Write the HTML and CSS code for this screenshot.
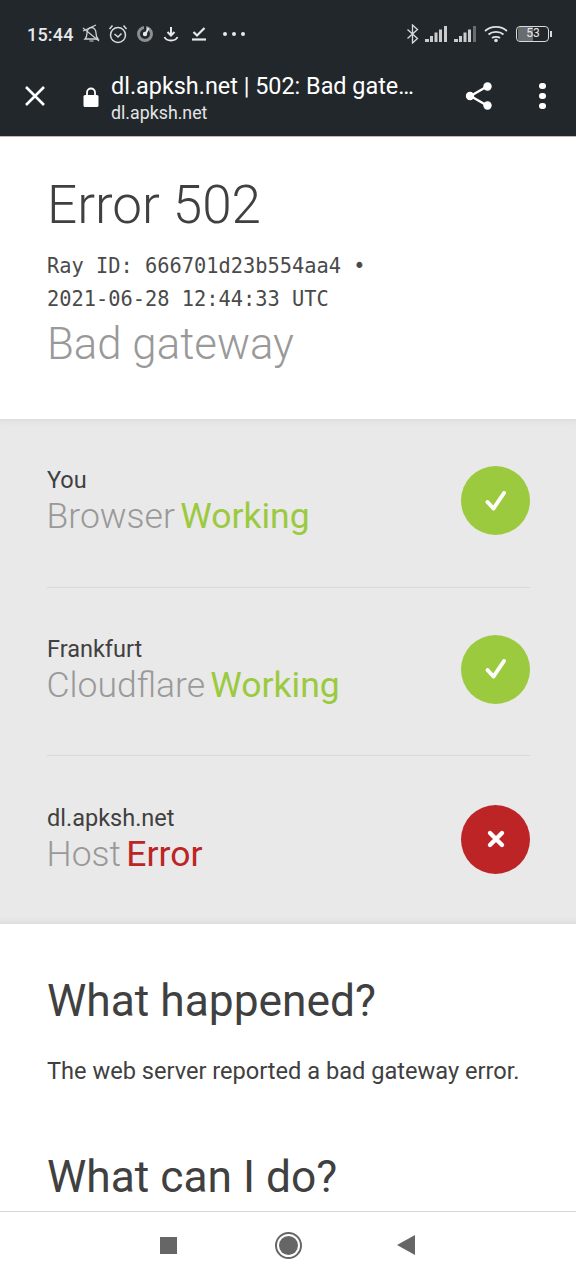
FILE: index.html
```html
<!DOCTYPE html>
<html lang="en">
<head>
<meta charset="utf-8">
<title>dl.apksh.net | 502: Bad gateway</title>
<link rel="stylesheet" href="styles.css">
</head>
<body>
<header class="chrome">
  <div class="status">
    <span class="time">15:44</span>
    <svg class="si bell" width="22" height="22" viewBox="0 0 22 22"><path d="M5 16c1.500-1.500 2-3 2-6 0-3 2-5.500 4.500-5.500S16 7 16 10c0 3 .5 4.500 2 6z" fill="none" stroke="#d0d2d3" stroke-width="1.300"/><path d="M9.500 18h4M3 5l16 13M3 8l13-6" fill="none" stroke="#d0d2d3" stroke-width="1.200"/></svg>
    <svg class="si alarm" width="20" height="22" viewBox="0 0 20 22"><circle cx="10" cy="12" r="7.500" fill="none" stroke="#d8dadb" stroke-width="1.500"/><path d="M6.500 11l3.500 3 3.500-3.500M1.500 6l3-3.500M18.500 6l-3-3.500" fill="none" stroke="#d8dadb" stroke-width="1.500"/></svg>
    <svg class="si prog" width="18" height="18" viewBox="0 0 18 18"><circle cx="9" cy="9" r="6.500" fill="none" stroke="#8b8d8f" stroke-width="3"/><path d="M9 9V1" stroke="#22272b" stroke-width="2"/><circle cx="9" cy="9" r="2.200" fill="#e6e7e8"/><path d="M12.500 3L10 8" stroke="#e6e7e8" stroke-width="2"/></svg>
    <svg class="si dl" width="16" height="18" viewBox="0 0 16 18"><path d="M8 2v8M4.500 7L8 10.500 11.500 7" fill="none" stroke="#e8e9ea" stroke-width="2"/><path d="M1.500 12c1 2.500 3.500 3.500 6.500 3.500s5.500-1 6.500-3.500" fill="none" stroke="#e8e9ea" stroke-width="1.800"/></svg>
    <svg class="si done" width="16" height="18" viewBox="0 0 16 18"><path d="M2.500 7l3.500 3.500L13.500 3" fill="none" stroke="#e8e9ea" stroke-width="2.200"/><path d="M1 14.500h14" stroke="#e8e9ea" stroke-width="2.200"/></svg>
    <span class="dots"><i></i><i></i><i></i></span>
    <span class="spacer"></span>
    <svg class="si bt" width="13" height="20" viewBox="0 0 13 20"><path d="M1.500 5.500l10 9-5 4.500V1l5 4.500-10 9" fill="none" stroke="#d8dadb" stroke-width="1.300"/></svg>
    <svg class="sig" width="22" height="18" viewBox="0 0 22 18"><path d="M0 14h4v3H0zM5 11h3v6H5zM9.500 7.500h3V17h-3zM14 4.500h3V17h-3zM19 1h3v16h-3z" fill="#c9cbcc"/></svg>
    <svg class="sig" width="22" height="18" viewBox="0 0 22 18"><path d="M0 14h4v3H0zM5 11h3v6H5zM9.500 7.500h3V17h-3zM14 4.500h3V17h-3z" fill="#c9cbcc"/><path d="M19 1h3v16h-3z" fill="#6a6d70"/></svg>
    <svg class="si wifi" width="24" height="18" viewBox="0 0 24 18"><path d="M1 6c6-5.500 16-5.500 22 0M4.500 9.500c4-3.500 11-3.500 15 0M8 13c2-1.500 6-1.500 8 0" fill="none" stroke="#e0e1e2" stroke-width="1.800"/><circle cx="12" cy="15.500" r="1.800" fill="#e0e1e2"/></svg>
    <span class="battery"><span class="level">53</span></span><span class="tip"></span>
  </div>
  <div class="toolbar">
    <svg class="close" width="24" height="24" viewBox="0 0 24 24"><path d="M3 3l18 18M21 3L3 21" stroke="#fff" stroke-width="2.600" fill="none"/></svg>
    <svg class="lock" width="18" height="22" viewBox="0 0 18 22"><path d="M3 9h12a1.500 1.500 0 0 1 1.500 1.500v9A1.500 1.500 0 0 1 15 21H3a1.500 1.500 0 0 1-1.500-1.500v-9A1.500 1.500 0 0 1 3 9z" fill="#fff"/><path d="M5 10V6.500a4 4 0 0 1 8 0V10" fill="none" stroke="#fff" stroke-width="1.800"/></svg>
    <div class="url">
      <div class="page-title">dl.apksh.net | 502: Bad gate…</div>
      <div class="host">dl.apksh.net</div>
    </div>
    <svg class="share" width="30" height="30" viewBox="0 0 30 30"><path d="M23 5.500L6.500 15 23 24.500" fill="none" stroke="#fff" stroke-width="2.400"/><circle cx="23.500" cy="5.500" r="4.200" fill="#fff"/><circle cx="6" cy="15" r="4.200" fill="#fff"/><circle cx="23.500" cy="24.500" r="4.200" fill="#fff"/></svg>
    <span class="menu"><i></i><i></i><i></i></span>
  </div>
</header>

<main class="page">
  <section class="intro">
    <h1>Error 502</h1>
    <p class="ray">Ray ID: 666701d23b554aa4 •<br>2021-06-28 12:44:33 UTC</p>
    <p class="sub">Bad gateway</p>
  </section>

  <section class="diagram">
    <div class="row">
      <div class="label">
        <div class="place">You</div>
        <div class="state"><span class="name">Browser</span> <span class="ok">Working</span></div>
      </div>
      <span class="badge good"><svg width="34" height="34" viewBox="0 0 34 34"><path d="M8.500 18l6 6.500L25 9" fill="none" stroke="#fff" stroke-width="4" stroke-linecap="round" stroke-linejoin="round"/></svg></span>
    </div>
    <div class="row">
      <div class="label">
        <div class="place">Frankfurt</div>
        <div class="state"><span class="name">Cloudflare</span> <span class="ok">Working</span></div>
      </div>
      <span class="badge good"><svg width="34" height="34" viewBox="0 0 34 34"><path d="M8.500 18l6 6.500L25 9" fill="none" stroke="#fff" stroke-width="4" stroke-linecap="round" stroke-linejoin="round"/></svg></span>
    </div>
    <div class="row">
      <div class="label">
        <div class="place">dl.apksh.net</div>
        <div class="state"><span class="name">Host</span> <span class="bad">Error</span></div>
      </div>
      <span class="badge fail"><svg width="30" height="30" viewBox="0 0 30 30"><path d="M9 9l12 12M21 9L9 21" fill="none" stroke="#fff" stroke-width="4.400" stroke-linecap="round"/></svg></span>
    </div>
  </section>

  <section class="info">
    <h2>What happened?</h2>
    <p>The web server reported a bad gateway error.</p>
    <h2 class="second">What can I do?</h2>
  </section>
</main>

<nav class="nav">
  <span class="square"></span>
  <span class="home"><i></i></span>
  <span class="back"></span>
</nav>
</body>
</html>
```
FILE: styles.css
```css
* { box-sizing: border-box; }
html, body { margin: 0; padding: 0; }
body {
  width: 576px;
  height: 1280px;
  display: flex;
  flex-direction: column;
  overflow: hidden;
  background: #fff;
  color: #404040;
  font-family: Roboto, "Liberation Sans", sans-serif;
}
.chrome {
  height: 137px;
  flex: none;
  background: #22272b;
  border-bottom: 1px solid #b9babb;
  color: #fff;
}
.status {
  height: 68px;
  padding: 0 24px 0 27px;
  display: flex;
  align-items: center;
}
.time { font-size: 18px; font-weight: 500; color: #e8e9ea; letter-spacing: .2px; margin-right: 6px; }
.si, .sig { flex: none; }
.alarm { margin-left: 6px; }
.prog { margin-left: 8px; }
.dl { margin-left: 9px; }
.done { margin-left: 12px; }
.dots { display: flex; gap: 5px; margin-left: 16px; }
.dots i { width: 4px; height: 4px; border-radius: 50%; background: #e8e9ea; }
.spacer { flex: 1; }
.bt { margin-right: -1px; }
.sig { margin-left: 7px; }
.bt + .sig { margin-left: 7px; }
.wifi { margin-left: 8px; }
.battery {
  width: 33px;
  height: 16px;
  margin-left: 8px;
  border: 1.500px solid #d8dadb;
  border-radius: 4px;
  font-size: 12px;
  line-height: 13px;
  color: #e8e9ea;
  padding: 0 0 0 1px;
  background: linear-gradient(90deg, #6a6d70 53%, transparent 53%) no-repeat;
  background-clip: content-box;
  text-align: center;
}
.level { display: block; }
.tip { width: 2px; height: 6px; background: #d8dadb; margin-left: 1px; }
.toolbar {
  height: 68px;
  display: flex;
  align-items: center;
  padding: 0 0 12px 23px;
}
.close { flex: none; }
.lock { flex: none; margin-left: 35px; margin-top: 2px; }
.url { margin-left: 11px; width: 353px; flex: none; position: relative; top: 3px; }
.page-title { font-size: 23.400px; line-height: 28px; color: #fff; position: relative; top: -2px; }
.host { font-size: 17.800px; line-height: 22px; color: #e4e5e6; }
.share { flex: none; margin-left: 0; }
.menu { display: flex; flex-direction: column; gap: 3.500px; margin-left: 45px; }
.menu i { width: 6.500px; height: 6.500px; border-radius: 50%; background: #fff; }

.page { flex: 1; min-height: 0; overflow: hidden; }
.intro { height: 282px; padding: 39px 47px 0; }
h1 { margin: 0; font-size: 53px; line-height: 58px; font-weight: 300; color: #404040; }
.ray {
  margin: 16px 0 0;
  font-family: "DejaVu Sans Mono", monospace;
  font-size: 20.350px;
  line-height: 33px;
  color: #4a4a4a;
}
.sub { margin: 5px 0 0; font-size: 43.800px; line-height: 46px; font-weight: 300; color: #999; }

.diagram {
  height: 505px;
  padding: 0 46px 0 47px;
  background: #e9e9e9;
  box-shadow: inset 0 8px 8px -8px #d4d4d4, inset 0 -8px 8px -8px #d4d4d4;
}
.row {
  height: 168.500px;
  display: flex;
  align-items: center;
  justify-content: space-between;
  border-bottom: 1px solid #d9d9d9;
}
.row:last-child { border-bottom: 0; }
.row:last-child .badge { top: -1px; }
.label { margin-top: -1px; }
.place { font-size: 23.500px; line-height: 28px; color: #404040; }
.state { font-size: 35.500px; line-height: 44px; font-weight: 400; word-spacing: -3.500px; margin-left: -.500px; }
.name { color: #999; font-weight: 300; }
.ok { color: #9bca3e; }
.bad { color: #bd2426; }
.badge {
  width: 69px;
  height: 69px;
  border-radius: 50%;
  display: flex;
  align-items: center;
  justify-content: center;
  flex: none;
  position: relative;
  top: -2px;
}
.good { background: #9bca3e; }
.fail { background: #bd2426; }

.info { padding: 48.500px 47px 0; }
h2 { margin: 0; font-size: 44.300px; line-height: 56px; font-weight: 400; color: #404040; }
.info p { margin: 26px 0 0; font-size: 23.600px; line-height: 32px; color: #404040; }
.second { margin-top: 62px; }

.nav {
  height: 69px;
  flex: none;
  background: #fff;
  border-top: 1px solid #d6d6d6;
  display: flex;
  align-items: center;
  padding-bottom: 2px;
}
.square { width: 17px; height: 17px; background: #666; margin-left: 160px; }
.home {
  width: 27px;
  height: 27px;
  border: 2px solid #666;
  border-radius: 50%;
  margin-left: 98px;
  display: flex;
  align-items: center;
  justify-content: center;
}
.home i { width: 19px; height: 19px; border-radius: 50%; background: #666; }
.back {
  width: 0;
  height: 0;
  margin-left: 95px;
  border-top: 10px solid transparent;
  border-bottom: 10px solid transparent;
  border-right: 18px solid #666;
}
```
